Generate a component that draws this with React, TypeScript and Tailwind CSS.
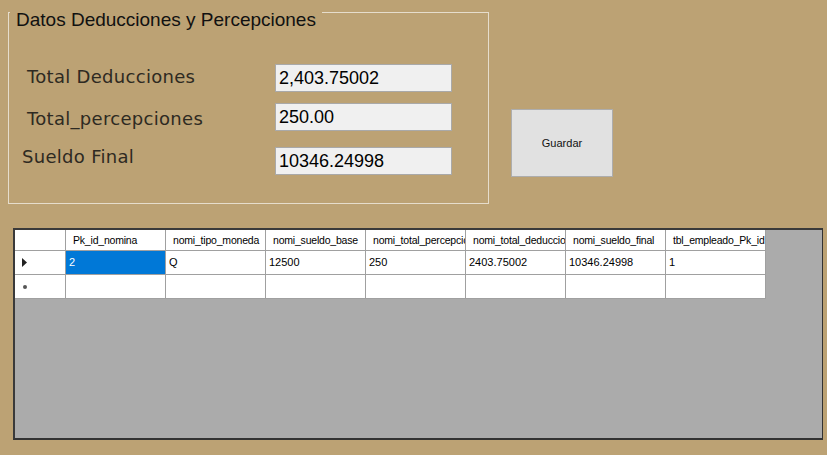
import React from "react";

const cols = [
  "Pk_id_nomina",
  "nomi_tipo_moneda",
  "nomi_sueldo_base",
  "nomi_total_percepciones",
  "nomi_total_deducciones",
  "nomi_sueldo_final",
  "tbl_empleado_Pk_id",
];
const row = ["2", "Q", "12500", "250", "2403.75002", "10346.24998", "1"];

const labelStyle = { fontFamily: "'DejaVu Sans', sans-serif", fontSize: "18px", letterSpacing: "0.3px" };

export default function App() {
  return (
    <div className="w-[827px] h-[455px] bg-[#bca274] overflow-hidden" style={{ fontFamily: "'Liberation Sans', Arial, sans-serif" }}>
      <div className="flex pt-[12px] pl-[8px]">
        <div className="relative w-[481px] h-[192px] border border-[#e6ddcc]">
          <div className="absolute left-[1px] top-[-3px] pl-[6px] pr-[6px] bg-[#bca274] text-[19px] leading-[20px] text-[#111]">
            Datos Deducciones y Percepciones
          </div>
          <div className="flex flex-col pt-[51px]">
            <div className="flex items-center h-[28px]">
              <div className="w-[266px] pl-[18px] pb-[3px] text-[#2e2a22]" style={labelStyle}>Total Deducciones</div>
              <div className="w-[177px] h-[28px] bg-[#f0f0f0] border border-[#a9a9a9] pl-[3px] text-[18px] leading-[26px] text-black">2,403.75002</div>
            </div>
            <div className="flex items-center h-[28px] mt-[11px]">
              <div className="w-[266px] pl-[18px] pt-[2px] text-[#2e2a22]" style={labelStyle}>Total_percepciones</div>
              <div className="w-[177px] h-[28px] bg-[#f0f0f0] border border-[#a9a9a9] pl-[3px] text-[18px] leading-[26px] text-black">250.00</div>
            </div>
            <div className="flex items-center h-[28px] mt-[16px]">
              <div className="w-[266px] pl-[13px] pb-[9px] text-[#2e2a22]" style={labelStyle}>Sueldo Final</div>
              <div className="w-[177px] h-[28px] bg-[#f0f0f0] border border-[#a9a9a9] pl-[3px] text-[18px] leading-[26px] text-black">10346.24998</div>
            </div>
          </div>
        </div>
        <div className="ml-[22px] mt-[97px] w-[102px] h-[68px] bg-[#e1e1e1] border border-[#adadad] flex items-center justify-center text-[11px] text-[#111]">
          Guardar
        </div>
      </div>
      <div className="ml-[13px] mt-[24px] w-[810px] h-[212px] bg-[#ababab] border-l-2 border-t-2 border-r border-b-2 border-l-[#3a3a3a] border-t-[#3a3a3a] border-r-[#333] border-b-[#333]">
        <div className="flex h-[21px] bg-white text-[10.5px] tracking-[-0.2px] leading-[20px] text-black w-fit">
          <div className="w-[51px] border-r border-b border-[#a0a0a0]" />
          {cols.map((c) => (
            <div key={c} className="w-[100px] border-r border-b border-[#a0a0a0] pl-[7px] overflow-hidden whitespace-nowrap">
              {c}
            </div>
          ))}
        </div>
        <div className="flex h-[24px] bg-white text-[11px] leading-[23px] text-black w-fit">
          <div className="w-[51px] border-r border-b border-[#a0a0a0] flex items-center pl-[7px]">
            <svg width="6" height="9" viewBox="0 0 6 9"><path d="M0 0 L5 4.5 L0 9 Z" fill="#222" /></svg>
          </div>
          {row.map((v, i) => (
            <div key={i} className={`w-[100px] border-r border-b border-[#a0a0a0] pl-[3px] overflow-hidden whitespace-nowrap ${i === 0 ? "bg-[#0078d7] text-white" : ""}`}>
              {v}
            </div>
          ))}
        </div>
        <div className="flex h-[24px] bg-white text-[11px] w-fit">
          <div className="w-[51px] border-r border-b border-[#a0a0a0] flex items-center pl-[8px]">
            <div className="w-[4px] h-[4px] rounded-full bg-[#555]" />
          </div>
          {row.map((_, i) => (
            <div key={i} className="w-[100px] border-r border-b border-[#a0a0a0]" />
          ))}
        </div>
      </div>
    </div>
  );
}
